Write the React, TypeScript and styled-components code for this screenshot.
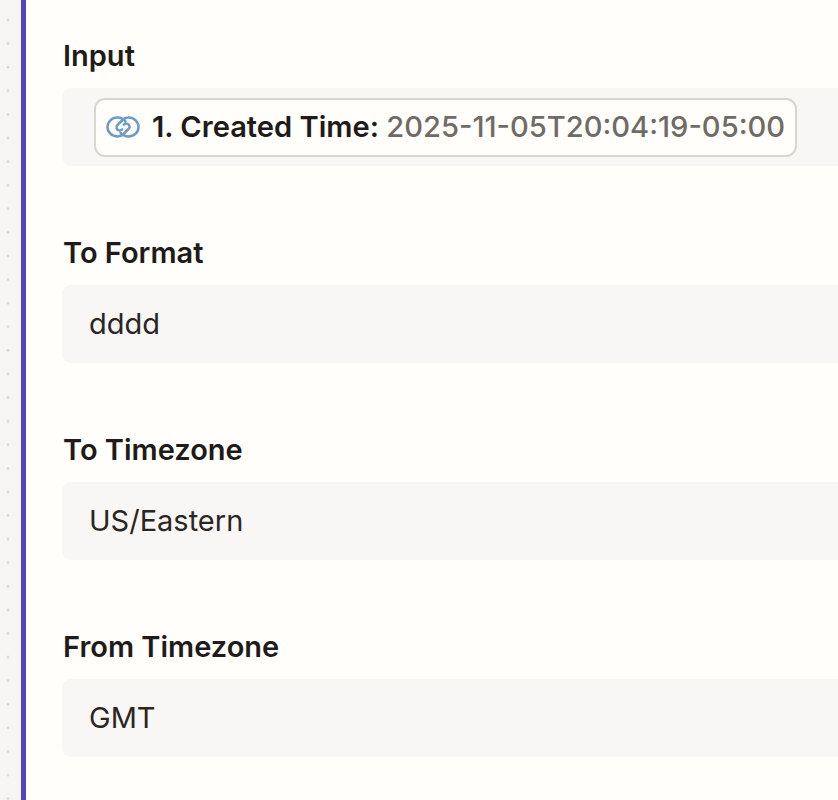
import React from "react";
import styled, { createGlobalStyle } from "styled-components";

const Global = createGlobalStyle`
  html, body { margin: 0; padding: 0; background: #fffefb; }
  body { font-family: Inter, "Liberation Sans", sans-serif; overflow: hidden; }
`;

const Page = styled.div`
  display: flex;
  width: 838px;
  height: 800px;
  overflow: hidden;
  background: #fffefb;
`;

const Rail = styled.div`
  width: 21px;
  flex: none;
  background-color: #f7f6f4;
  background-image: radial-gradient(circle at 8px 20px, #d9d7d2 0, #d9d7d2 0.8px, transparent 1.8px);
  background-size: 21px 23.6px;
`;

const Panel = styled.div`
  flex: 1;
  min-width: 0;
  border-left: 5px solid #5246bd;
  padding: 38px 0 0 36px;
  display: flex;
  flex-direction: column;
  gap: 69px;
`;

const FieldGroup = styled.section`
  display: flex;
  flex-direction: column;
  gap: 15px;
`;

const Label = styled.div`
  font-size: 29px;
  line-height: 35px;
  font-weight: 600;
  color: #201b18;
  padding-left: 1px;
`;

const Field = styled.div`
  box-sizing: border-box;
  width: 800px;
  height: 78px;
  border-radius: 9px;
  background: #f8f7f5;
  display: flex;
  align-items: center;
  padding: 0 0 2px 27px;
  font-size: 29px;
  color: #2b2623;
`;

const Chip = styled.div`
  box-sizing: border-box;
  height: 59px;
  display: inline-flex;
  align-items: center;
  gap: 12px;
  margin: 2px 0 0 5px;
  padding: 0 10px 1px;
  background: #fffefb;
  border: 2px solid #d9d6ce;
  border-radius: 11px;
  font-size: 29.1px;
  white-space: nowrap;
`;

const ChipName = styled.span`
  font-weight: 600;
  color: #201b18;
`;

const ChipValue = styled.span`
  font-weight: 500;
  color: #6f6b66;
`;

const linkPath =
  "M19.5 6.2 C17.5 3.8 14.8 2.5 11.5 2.5 C5.8 2.5 1.5 6.8 1.5 12 C1.5 17.2 5.8 21.5 11.5 21.5 C14 21.5 16 20.6 17.6 19 L22.6 14 C24.4 12.1 23.6 9.2 21 8.6 C19.8 8.3 18.6 8.8 17.8 9.6";

const LinkLogo = () => (
  <svg width="34" height="24" viewBox="0 0 34 24" fill="none" stroke="#6d9bc8" strokeWidth="2.5" strokeLinecap="round">
    <path d={linkPath} />
    <path d={linkPath} transform="rotate(180 17 12)" />
  </svg>
);

export default function App() {
  return (
    <Page>
      <Global />
      <Rail />
      <Panel>
        <FieldGroup>
          <Label>Input</Label>
          <Field>
            <Chip>
              <LinkLogo />
              <span>
                <ChipName>1. Created Time: </ChipName>
                <ChipValue>2025-11-05T20:04:19-05:00</ChipValue>
              </span>
            </Chip>
          </Field>
        </FieldGroup>
        <FieldGroup>
          <Label>To Format</Label>
          <Field>dddd</Field>
        </FieldGroup>
        <FieldGroup>
          <Label>To Timezone</Label>
          <Field>US/Eastern</Field>
        </FieldGroup>
        <FieldGroup>
          <Label>From Timezone</Label>
          <Field>GMT</Field>
        </FieldGroup>
      </Panel>
    </Page>
  );
}
